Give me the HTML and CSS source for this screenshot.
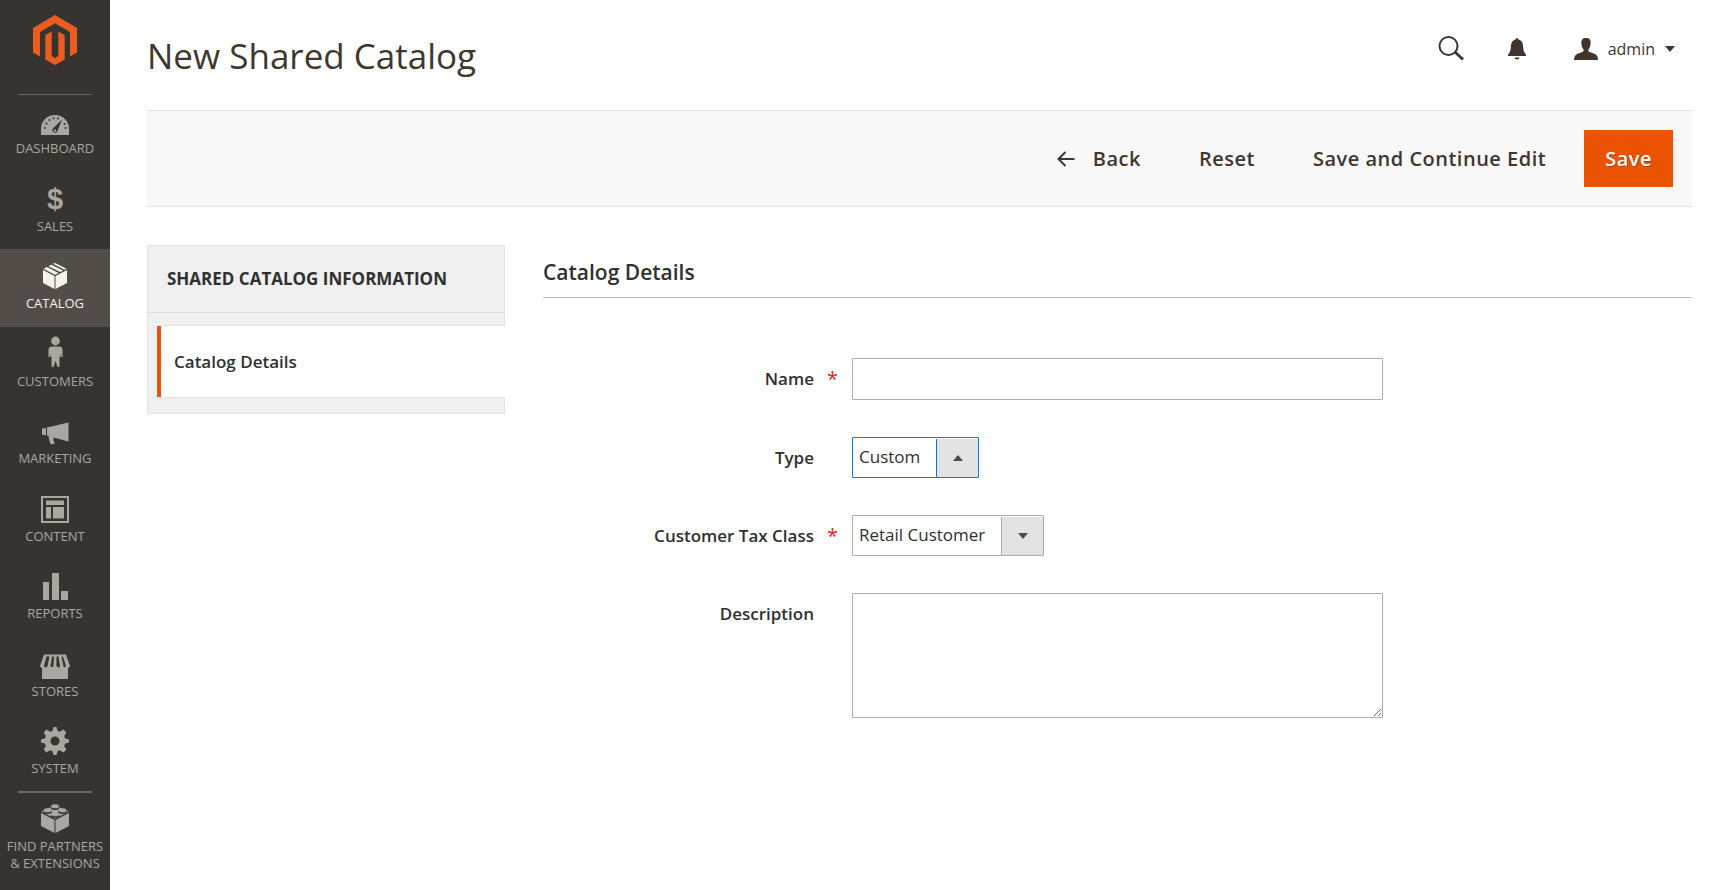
FILE: index.html
```html
<!DOCTYPE html>
<html lang="en">
<head>
<meta charset="utf-8">
<title>New Shared Catalog</title>
<link rel="stylesheet" href="styles.css">
</head>
<body>
<div class="page">
  <aside class="menu">
    <a class="menu-logo" href="#" aria-label="Home">
      <svg width="44" height="50" viewBox="0 0 44 50"><path d="M22 0 44 13V37.500L37 41.500V17L22 8.300 7 17V41.500L0 37.500V13Z"/><path d="M12.300 20 18.700 16.500V41L22 43 25.300 41V16.500L31.700 20V44.500L22 50 12.300 44.500Z"/></svg>
    </a>
    <nav class="menu-nav">
      <ul class="menu-list">
        <li><a class="menu-item" href="#">
          <svg class="menu-icon" viewBox="0 0 32 36"><path d="M2 32V26a14 14 0 0 1 28 0V32Z"/><g class="cut"><circle cx="6" cy="25" r="1"/><circle cx="7.500" cy="20.500" r="1"/><circle cx="10.500" cy="17" r="1"/><circle cx="14.500" cy="15.200" r="1"/><circle cx="19" cy="15.500" r="1"/><circle cx="25.500" cy="21" r="1"/><circle cx="26.500" cy="25" r="1"/><path d="M23 16.500 18.500 28A2.600 2.600 0 1 1 14 25.500Z"/></g><circle cx="16" cy="27.600" r="1.200"/></svg>
          <span>Dashboard</span></a></li>
        <li><a class="menu-item" href="#">
          <span class="menu-icon dollar" aria-hidden="true">$</span>
          <span>Sales</span></a></li>
        <li><a class="menu-item is-active" href="#">
          <svg class="menu-icon" viewBox="0 0 32 36"><path d="M4 12 15.500 18V31L4 25ZM28 12 16.500 18V31L28 25ZM4.500 10.800 8 9 19.500 15 16 16.800ZM9.500 8.200 12.300 6.700 24 12.600 21.200 14.100ZM14 5.800 16 5 27.500 10.800 25.500 11.800Z"/></svg>
          <span>Catalog</span></a></li>
        <li><a class="menu-item" href="#">
          <svg class="menu-icon" viewBox="0 0 32 36"><circle cx="16.500" cy="5" r="4.400"/><path d="M12 10.500H21Q23.500 11 23.500 14V21H21.500V17L20.500 22V31H18.500L16.500 25 14.500 31H12.500V22L11.500 17V21H9.500V14Q9.500 11 12 10.500Z"/></svg>
          <span>Customers</span></a></li>
        <li><a class="menu-item" href="#">
          <svg class="menu-icon" viewBox="0 0 32 36"><path d="M3 15.500 7 15V22.500L3 21.500ZM8 14.500 29.500 9.500V28.500L14.500 24.500Q14 28 16 30.500L12 31.500Q10 28.500 9.500 23L8 22.500Z"/></svg>
          <span>Marketing</span></a></li>
        <li><a class="menu-item" href="#">
          <svg class="menu-icon" viewBox="0 0 32 36"><path fill-rule="evenodd" d="M2 5H30V32H2ZM4 7V30H28V7Z"/><path d="M7 9.500H25V14H7ZM7 16H12V27.500H7ZM14 16H25V27.500H14Z"/></svg>
          <span>Content</span></a></li>
        <li><a class="menu-item" href="#">
          <svg class="menu-icon" viewBox="0 0 32 36"><path d="M4 14H10V32H4ZM13 5H20V32H13ZM22 23H29V32H22Z"/></svg>
          <span>Reports</span></a></li>
        <li><a class="menu-item" href="#">
          <svg class="menu-icon" viewBox="0 0 32 36"><path d="M5 8.500H27L31 20Q30 23 26.500 22Q23 24 21 21Q18.500 24 16 22Q13.500 24 11 21Q9 24 5.500 22Q2 23 1 20ZM3 20H29V33H3Z"/><path class="cut" d="M7.500 10.500H10.500L8.500 20Q7.500 22 6 21L5 20ZM13 10.500H15L14.500 20Q13.500 22 11.500 20.500ZM17.500 10.500H19.500L21 20.500Q19 22.500 17.500 20ZM22.500 10.500H24L27 20Q26 22 24.500 20.500Z"/></svg>
          <span>Stores</span></a></li>
        <li><a class="menu-item" href="#">
          <svg class="menu-icon" viewBox="0 0 32 36"><path fill-rule="evenodd" d="M14.500 4H17.500L18.500 7.800 20.800 8.800 24.500 6.500 27.300 9.500 25.200 13 26.200 15.500 30 16.500V19.500L26.200 20.500 25.200 23 27.300 26.500 24.500 29.500 20.800 27.200 18.500 28.200 17.500 32H14.500L13.500 28.200 11.200 27.200 7.500 29.500 4.700 26.500 6.800 23 5.800 20.500 2 19.500V16.500L5.800 15.500 6.800 13 4.700 9.500 7.500 6.500 11.200 8.800 13.500 7.800ZM16 13.500a4.500 4.500 0 1 0 0 9 4.500 4.500 0 0 0 0-9Z"/></svg>
          <span>System</span></a></li>
      </ul>
      <a class="menu-item menu-partners" href="#">
        <svg class="menu-icon" viewBox="0 0 32 36"><path d="M2 12 15.500 19V32L2 25ZM30 12 16.500 19V32L30 25ZM2.500 10.800 16 4 29.500 10.800 16 17.800Z"/><g class="cut"><ellipse cx="16" cy="6.500" rx="4.300" ry="2.500"/><ellipse cx="8.500" cy="10.500" rx="4.300" ry="2.500"/><ellipse cx="23.500" cy="10.500" rx="4.300" ry="2.500"/><ellipse cx="16" cy="14.500" rx="4.300" ry="2.500"/></g><g><ellipse cx="16" cy="5.300" rx="4" ry="2"/><ellipse cx="8.500" cy="9.300" rx="4" ry="2"/><ellipse cx="23.500" cy="9.300" rx="4" ry="2"/><ellipse cx="16" cy="13.300" rx="4" ry="2"/></g></svg>
        <span>Find Partners<br>&amp; Extensions</span></a>
    </nav>
  </aside>

  <div class="main">
    <header class="header">
      <h1 class="title">New Shared Catalog</h1>
      <div class="tools">
        <button class="tool" type="button" aria-label="Search"><svg width="26" height="26" viewBox="0 0 26 26"><circle class="line" cx="10.500" cy="10" r="9"/><path class="line thick" d="M17 16 25 23.500"/></svg></button>
        <button class="tool" type="button" aria-label="Notifications"><svg width="20" height="22" viewBox="0 0 20 22"><path d="M10 0Q11.500 0 11.500 1.500C15.500 2.500 16 6 16.200 9.500Q16.500 14.500 19 16.500V18H1V16.500Q3.500 14.500 3.800 9.500C4 6 4.500 2.500 8.500 1.500Q8.500 0 10 0ZM7.500 19.500H12.500Q12 21.500 10 21.500T7.500 19.500Z"/></svg></button>
        <button class="tool account" type="button"><svg width="24" height="22" viewBox="0 0 24 22"><path d="M12 0C15.500 0 17 2 16.600 5.500Q16.500 9.500 14.500 11.500V13.500L21 16Q24 17.500 24 22H0Q0 17.500 3 16L9.500 13.500V11.500Q7.500 9.500 7.400 5.500C7 2 8.500 0 12 0Z"/></svg><span>admin</span><svg width="10" height="6" viewBox="0 0 10 6"><path d="M0 0H10L5 6Z"/></svg></button>
      </div>
    </header>

    <div class="actions">
      <button class="action" type="button"><svg width="18" height="16" viewBox="0 0 18 16"><path class="line" d="M17.500 8H2M8.500 1 1.500 8 8.500 15"/></svg><span>Back</span></button>
      <button class="action" type="button">Reset</button>
      <button class="action" type="button">Save and Continue Edit</button>
      <button class="action action-primary" type="submit" form="catalog-form">Save</button>
    </div>

    <div class="columns">
      <section class="tabs">
        <h2 class="tabs-title">Shared Catalog Information</h2>
        <ul class="tabs-list"><li><a class="tab" href="#catalog-form">Catalog Details</a></li></ul>
      </section>

      <form class="form" id="catalog-form">
        <h2 class="form-title">Catalog Details</h2>
        <div class="fields">
          <label class="label required" for="name">Name</label>
          <input class="control" id="name" type="text">

          <label class="label" for="type">Type</label>
          <div class="select is-open">
            <select class="control" id="type"><option>Custom</option></select>
            <span class="select-button"><svg width="10" height="6" viewBox="0 0 10 6"><path d="M0 6H10L5 0Z"/></svg></span>
          </div>

          <label class="label required" for="tax">Customer Tax Class</label>
          <div class="select">
            <select class="control" id="tax"><option>Retail Customer</option></select>
            <span class="select-button"><svg width="10" height="6" viewBox="0 0 10 6"><path d="M0 0H10L5 6Z"/></svg></span>
          </div>

          <label class="label" for="description">Description</label>
          <textarea class="control area" id="description"></textarea>
        </div>
      </form>
    </div>
  </div>
</div>
</body>
</html>
```
FILE: styles.css
```css
* { box-sizing: border-box; }

body {
  margin: 0;
  background: #fff;
  color: #303030;
  font-family: "Open Sans", "Noto Sans", sans-serif;
  font-size: 17px;
}

h1, h2, ul { margin: 0; padding: 0; }
ul { list-style: none; }
a { color: inherit; text-decoration: none; }
button { border: 0; padding: 0; background: none; color: inherit; font: inherit; cursor: pointer; }
svg { display: block; fill: currentColor; }

.page { display: flex; min-height: 100vh; }

/* Side menu */
.menu {
  flex: none;
  width: 110px;
  background: #373330;
  color: #aaa6a0;
}
.menu-logo {
  display: flex;
  justify-content: center;
  height: 94px;
  padding-top: 15px;
  color: #eb5d1e;
}
.menu-nav { position: relative; }
.menu-list {
  display: grid;
  grid-auto-rows: 1fr;
  height: 698px;
}
.menu-list::before,
.menu-partners::before {
  content: "";
  position: absolute;
  top: 0;
  left: 18px;
  right: 18px;
  height: 1px;
  background: #736963;
}
.menu-item {
  display: flex;
  flex-direction: column;
  align-items: center;
  height: 100%;
  padding-top: 9px;
  font-size: 13px;
  line-height: 17px;
  text-align: center;
  text-transform: uppercase;
  white-space: nowrap;
}
.menu-item.is-active { background: #524d49; color: #f7f3eb; }
.menu-icon { flex: none; width: 32px; height: 36px; margin-bottom: 1px; }
.menu-icon .cut { fill: #373330; }
.dollar {
  font-family: "Liberation Sans", Arial, sans-serif;
  font-size: 29px;
  font-weight: 700;
  line-height: 36px;
}
.menu-partners { position: relative; height: auto; }
.menu-partners::before { height: 2px; top: -1px; }

/* Page header */
.main { flex: 1; min-width: 0; padding: 0 35px 0 37px; }
.header {
  display: flex;
  justify-content: space-between;
  align-items: flex-start;
  height: 110px;
  color: #41362f;
}
.title { padding-top: 32px; font-size: 35px; font-weight: 400; line-height: 48px; }
.tools { display: flex; align-items: center; gap: 43px; padding: 33px 17px 0 0; }
.tool { display: flex; align-items: center; height: 32px; }
.tool .line { fill: none; stroke: currentColor; stroke-width: 2; }
.tool .thick { stroke-width: 3; }
.account { gap: 10px; margin-left: 4px; font-size: 16px; }

/* Action bar */
.actions {
  display: flex;
  justify-content: flex-end;
  align-items: center;
  gap: 38px;
  height: 97px;
  padding-right: 19px;
  border-top: 1px solid #e3e3e3;
  border-bottom: 1px solid #e3e3e3;
  background: #f8f8f8;
}
.action {
  display: flex;
  align-items: center;
  gap: 18px;
  height: 57px;
  padding: 0 10px;
  color: #41362f;
  font-size: 20px;
  font-weight: 600;
  letter-spacing: .025em;
}
.action .line { fill: none; stroke: currentColor; stroke-width: 2; }
.action-primary {
  margin-left: -10px;
  padding: 0 21px;
  background: #eb5202;
  color: #fff;
  text-shadow: 1px 1px 0 rgba(0, 0, 0, .25);
}

/* Content */
.columns { display: flex; gap: 38px; padding-top: 38px; }
.tabs {
  flex: none;
  align-self: flex-start;
  width: 358px;
  padding-bottom: 15px;
  border: 1px solid #e3e3e3;
  background: #f0f0f0;
}
.tabs-title {
  padding: 20px 19px;
  border-bottom: 1px solid #e3e3e3;
  font-size: 17px;
  font-weight: 700;
  line-height: 26px;
  text-transform: uppercase;
}
.tabs-list { padding-top: 12px; }
.tab {
  display: block;
  margin: 0 -1px 0 9px;
  padding: 23px 13px 23px 17px;
  border: 1px solid #e3e3e3;
  border-width: 1px 0;
  background: #fff;
  box-shadow: inset 4px 0 #eb5202;
  font-size: 17px;
  font-weight: 600;
  line-height: 25px;
}

.form { flex: 1; min-width: 0; }
.form-title {
  padding: 13px 0 11px;
  border-bottom: 1px solid #cabfb8;
  font-size: 21px;
  font-weight: 600;
  line-height: 28px;
}
.fields {
  display: grid;
  grid-template-columns: 309fr 531fr 309fr;
  row-gap: 37px;
  padding-top: 60px;
}
.label {
  display: flex;
  justify-content: flex-end;
  grid-column: 1;
  font-size: 17px;
  font-weight: 600;
  line-height: 41px;
}
.label::after { content: ""; width: 25px; margin-left: 13px; }
.required::after { content: "*"; color: #e22626; font-size: 20px; font-weight: 400; }
.control {
  width: 100%;
  height: 42px;
  border: 1px solid #adadad;
  border-radius: 1px;
  background: #fff;
  color: #303030;
  font: inherit;
  font-size: 17px;
}
.select { position: relative; justify-self: start; }
.select .control {
  display: block;
  width: auto;
  height: 41px;
  padding: 0 57px 3px 6px;
  appearance: none;
}
.select-button {
  position: absolute;
  top: 2px;
  right: 1px;
  bottom: 1px;
  display: flex;
  align-items: center;
  justify-content: center;
  width: 42px;
  border-left: 1px solid #adadad;
  background: #e3e3e3;
  color: #514943;
  pointer-events: none;
}
.is-open .control, .is-open .select-button { border-color: #007bdb; }
.control.area { display: block; height: 125px; resize: vertical; }
```
